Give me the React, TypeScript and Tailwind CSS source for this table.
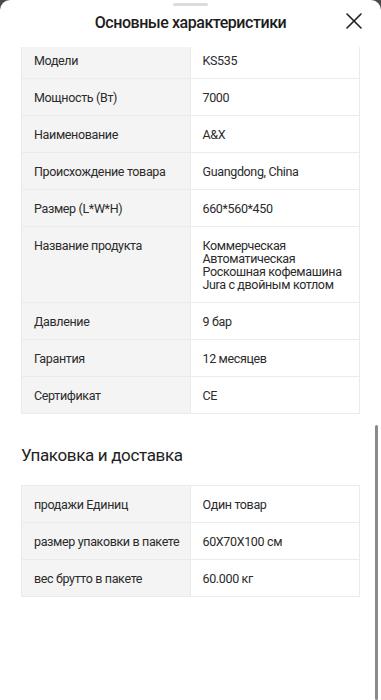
import { X } from "lucide-react";

type Row = { label: string; value: string };

const specs: Row[] = [
  { label: "Модели", value: "KS535" },
  { label: "Мощность (Вт)", value: "7000" },
  { label: "Наименование", value: "A&X" },
  { label: "Происхождение товара", value: "Guangdong, China" },
  { label: "Размер (L*W*H)", value: "660*560*450" },
  { label: "Название продукта", value: "Коммерческая Автоматическая Роскошная кофемашина Jura с двойным котлом" },
  { label: "Давление", value: "9 бар" },
  { label: "Гарантия", value: "12 месяцев" },
  { label: "Сертификат", value: "CE" },
];

const packing: Row[] = [
  { label: "продажи Единиц", value: "Один товар" },
  { label: "размер упаковки в пакете", value: "60X70X100 см" },
  { label: "вес брутто в пакете", value: "60.000 кг" },
];

const SpecTable = ({ rows, cutTop }: { rows: Row[]; cutTop?: boolean }) => {
  return (
    <div className={`mx-[21px] border-x border-b border-[#ebebeb] ${cutTop ? "" : "border-t"}`}>
      {rows.map((r, i) => (
        <div key={r.label} className={`grid grid-cols-2 ${i > 0 ? "border-t border-[#ebebeb]" : ""}`}>
          <div className={`bg-[#f4f4f4] border-r border-[#ebebeb] pl-3 pr-1 pb-[11px] ${cutTop && i === 0 ? "pt-[7px]" : "pt-3"}`}>
            {r.label}
          </div>
          <div className={`pl-3 pr-3 pb-[11px] ${cutTop && i === 0 ? "pt-[7px]" : "pt-3"}`}>{r.value}</div>
        </div>
      ))}
    </div>
  );
};

export default function App() {
  return (
    <div className="bg-[#4a4a4a] h-[700px] overflow-hidden" style={{ fontFamily: "Roboto, 'Noto Sans', sans-serif" }}>
      <div className="relative bg-white rounded-t-[10px] h-full text-[12.5px] leading-[13px] tracking-[-0.35px] text-[#2b2b2b]">
        <div className="flex justify-center pt-[3px]">
          <div className="w-[35px] h-[3px] rounded-full bg-[#dcdcdc]" />
        </div>
        <div className="relative h-[41px] flex items-center justify-center">
          <h1 className="text-[16px] leading-[20px] font-medium tracking-[-0.45px] text-[#1c1c1c] -mt-[7px]">Основные характеристики</h1>
          <button className="absolute right-[13px] top-[1px] text-[#222]">
            <X size={28} strokeWidth={1.4} />
          </button>
        </div>
        <SpecTable rows={specs} cutTop />
        <h2 className="mx-[21px] mt-[31px] mb-[20px] text-[17px] leading-[20px] font-normal tracking-[-0.35px] text-[#222]">Упаковка и доставка</h2>
        <SpecTable rows={packing} />
        <div className="absolute right-[3px] top-[425px] w-[3px] h-[275px] bg-[#8a8a8a] rounded-full" />
      </div>
    </div>
  );
}
